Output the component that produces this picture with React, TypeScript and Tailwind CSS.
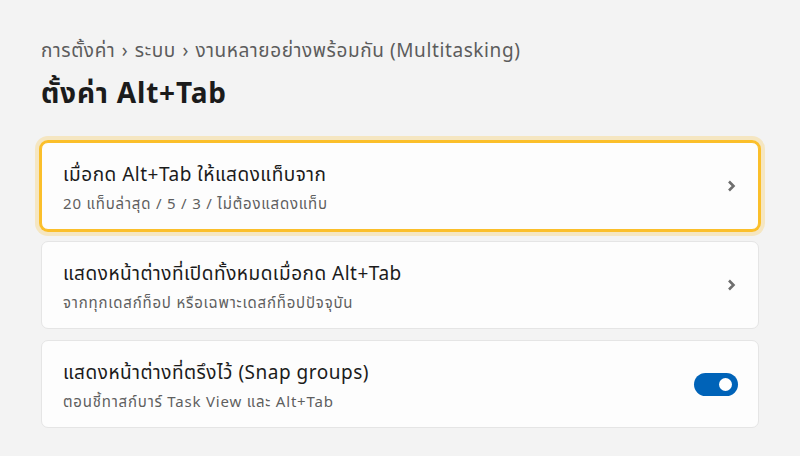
function Chevron() {
  return (
    <svg width="9" height="12" viewBox="0 0 9 12" className="shrink-0">
      <path d="M2 1.5 L6.5 6 L2 10.5" fill="none" stroke="#6e6e6e" strokeWidth="2.6" strokeLinejoin="miter" />
    </svg>
  );
}

function Row({
  title,
  subtitle,
  focused,
  right,
}: {
  title: string;
  subtitle: string;
  focused?: boolean;
  right: React.ReactNode;
}) {
  return (
    <div
      className={`flex items-center justify-between h-[88px] pl-[21px] rounded-[7px] bg-[#fdfdfd] border ${
        focused
          ? 'border-[#fbbf2a] pr-[22px] shadow-[0_0_0_2px_#fbbf2a,0_0_0_6px_rgba(251,191,42,0.25)]'
          : 'border-[#e5e5e5] pr-[22px]'
      }`}
    >
      <div className="flex flex-col pt-[3px]">
        <span className="text-[19px] leading-[26px] tracking-[0.5px] text-[#1b1b1b]">{title}</span>
        <span className="text-[15px] leading-[22px] tracking-[0.8px] mt-[5px] text-[#5f5f5f]">{subtitle}</span>
      </div>
      {right}
    </div>
  );
}

export default function App() {
  return (
    <div
      className="w-[800px] h-[456px] bg-[#f3f3f3] px-[41px] pt-[36px] overflow-hidden"
      style={{ fontFamily: '"Noto Sans", "Noto Sans Thai", sans-serif' }}
    >
      <div className="text-[19px] leading-[28px] tracking-[0.6px] text-[#5c5c5c] whitespace-nowrap">
        การตั้งค่า <span className="mx-[1px]">›</span> ระบบ <span className="mx-[1px]">›</span> งานหลายอย่างพร้อมกัน (Multitasking)
      </div>
      <h1 className="text-[28px] leading-[40px] tracking-[0.8px] font-bold text-[#1b1b1b] mt-[8px]">ตั้งค่า Alt+Tab</h1>

      <div className="flex flex-col gap-[11px] mt-[30px]">
        <Row
          focused
          title="เมื่อกด Alt+Tab ให้แสดงแท็บจาก"
          subtitle="20 แท็บล่าสุด / 5 / 3 / ไม่ต้องแสดงแท็บ"
          right={<Chevron />}
        />
        <Row
          title="แสดงหน้าต่างที่เปิดทั้งหมดเมื่อกด Alt+Tab"
          subtitle="จากทุกเดสก์ท็อป หรือเฉพาะเดสก์ท็อปปัจจุบัน"
          right={<Chevron />}
        />
        <Row
          title="แสดงหน้าต่างที่ตรึงไว้ (Snap groups)"
          subtitle="ตอนชี้ทาสก์บาร์ Task View และ Alt+Tab"
          right={
            <div className="w-[44px] h-[23px] mr-[-2px] rounded-full bg-[#0063b8] flex items-center justify-end pr-[6px]">
              <div className="w-[13px] h-[13px] rounded-full bg-white" />
            </div>
          }
        />
      </div>
    </div>
  );
}
